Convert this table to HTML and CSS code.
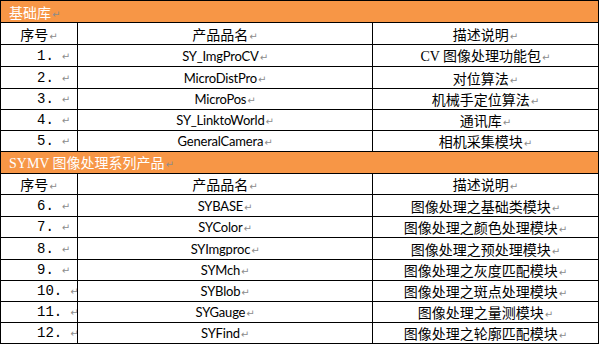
FILE: index.html
```html
<!DOCTYPE html>
<html lang="zh">
<head>
    <meta charset="UTF-8">
    <title>产品列表</title>
    <link rel="stylesheet" href="styles.css">
</head>
<body>
    <table class="product-table">
        <colgroup>
            <col class="col-no">
            <col class="col-name">
            <col class="col-desc">
        </colgroup>
        <tr class="group tall"><td colspan="3">基础库<span class="mark">↵</span></td></tr>
        <tr class="head tall"><td>序号<span class="mark">↵</span></td><td>产品品名<span class="mark">↵</span></td><td>描述说明<span class="mark">↵</span></td></tr>
        <tr class="tall"><td class="no">1.<span class="mark">↵</span></td><td class="name">SY_ImgProCV<span class="mark">↵</span></td><td class="desc"><span class="latin">CV</span> 图像处理功能包<span class="mark">↵</span></td></tr>
        <tr class="tall"><td class="no">2.<span class="mark">↵</span></td><td class="name">MicroDistPro<span class="mark">↵</span></td><td class="desc">对位算法<span class="mark">↵</span></td></tr>
        <tr><td class="no">3.<span class="mark">↵</span></td><td class="name">MicroPos<span class="mark">↵</span></td><td class="desc">机械手定位算法<span class="mark">↵</span></td></tr>
        <tr><td class="no">4.<span class="mark">↵</span></td><td class="name">SY_LinktoWorld<span class="mark">↵</span></td><td class="desc">通讯库<span class="mark">↵</span></td></tr>
        <tr><td class="no">5.<span class="mark">↵</span></td><td class="name">GeneralCamera<span class="mark">↵</span></td><td class="desc">相机采集模块<span class="mark">↵</span></td></tr>
        <tr class="group tall"><td colspan="3"><span class="latin">SYMV</span> 图像处理系列产品<span class="mark">↵</span></td></tr>
        <tr class="head"><td>序号<span class="mark">↵</span></td><td>产品品名<span class="mark">↵</span></td><td>描述说明<span class="mark">↵</span></td></tr>
        <tr class="tall"><td class="no">6.<span class="mark">↵</span></td><td class="name">SYBASE<span class="mark">↵</span></td><td class="desc">图像处理之基础类模块<span class="mark">↵</span></td></tr>
        <tr><td class="no">7.<span class="mark">↵</span></td><td class="name">SYColor<span class="mark">↵</span></td><td class="desc">图像处理之颜色处理模块<span class="mark">↵</span></td></tr>
        <tr class="tall"><td class="no">8.<span class="mark">↵</span></td><td class="name">SYImgproc<span class="mark">↵</span></td><td class="desc">图像处理之预处理模块<span class="mark">↵</span></td></tr>
        <tr><td class="no">9.<span class="mark">↵</span></td><td class="name">SYMch<span class="mark">↵</span></td><td class="desc">图像处理之灰度匹配模块<span class="mark">↵</span></td></tr>
        <tr><td class="no">10.<span class="mark">↵</span></td><td class="name">SYBlob<span class="mark">↵</span></td><td class="desc">图像处理之斑点处理模块<span class="mark">↵</span></td></tr>
        <tr><td class="no">11.<span class="mark">↵</span></td><td class="name">SYGauge<span class="mark">↵</span></td><td class="desc">图像处理之量测模块<span class="mark">↵</span></td></tr>
        <tr><td class="no">12.<span class="mark">↵</span></td><td class="name">SYFind<span class="mark">↵</span></td><td class="desc">图像处理之轮廓匹配模块<span class="mark">↵</span></td></tr>
    </table>
</body>
</html>
```

FILE: styles.css
```css
body {
    margin: 0;
    background: #ffffff;
    font-family: 'Noto Sans CJK SC', sans-serif;
    font-size: 14px;
    color: #000000;
}

.product-table {
    border-collapse: collapse;
    width: 599px;
    table-layout: fixed;
}

.col-no {
    width: 77px;
}

.col-name {
    width: 295px;
}

.product-table td {
    border: 1px solid #000000;
    height: 20px;
    padding: 0 4px;
    line-height: 16px;
    text-align: center;
    white-space: nowrap;
    overflow: hidden;
}

.product-table tr.tall td {
    height: 21px;
}

.group td {
    background-color: #f79646;
    color: #ffffff;
    text-align: left;
}

.product-table tr.group td {
    padding-left: 8px;
}

.latin {
    font-family: 'Liberation Serif', serif;
}

.mark {
    color: #8c8c8c;
    font-size: 10px;
    line-height: 1;
    margin-left: 1px;
    font-family: 'DejaVu Sans', sans-serif;
}

.no {
    font-family: 'Liberation Mono', monospace;
}

.product-table td.no {
    text-align: left;
    padding-left: 36px;
}

.no .mark {
    margin-left: 8px;
}

.name {
    font-family: 'Lato', 'Noto Sans', sans-serif;
    font-size: 13px;
    letter-spacing: -0.2px;
}
```
